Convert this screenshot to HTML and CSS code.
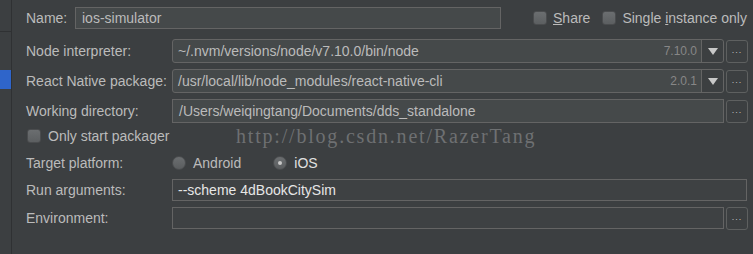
FILE: index.html
```
<!DOCTYPE html>
<html lang="en">
<head>
    <meta charset="UTF-8">
    <title>Run Configuration</title>
    <link rel="stylesheet" href="styles.css">
</head>
<body>
    <div class="window">
        <div class="sidebar">
            <div class="side-top"></div>
            <div class="side-selected"></div>
        </div>
        <div class="form">
            <div class="row row-name">
                <span class="label name-label">Name:</span>
                <div class="field name-field">ios-simulator</div>
                <div class="top-options">
                    <span class="check"></span><span class="opt-text"><u>S</u>hare</span>
                    <span class="check"></span><span class="opt-text">Single <u>i</u>nstance only</span>
                </div>
            </div>
            <div class="row row-node">
                <span class="label">Node interpreter:</span>
                <div class="combo">
                    <span class="combo-text">~/.nvm/versions/node/v7.10.0/bin/node</span>
                    <span class="combo-hint">7.10.0</span>
                    <span class="combo-arrow"></span>
                </div>
                <div class="dots">...</div>
            </div>
            <div class="row row-pkg">
                <span class="label">React Native package:</span>
                <div class="combo">
                    <span class="combo-text">/usr/local/lib/node_modules/react-native-cli</span>
                    <span class="combo-hint">2.0.1</span>
                    <span class="combo-arrow"></span>
                </div>
                <div class="dots">...</div>
            </div>
            <div class="row row-dir">
                <span class="label">Working directory:</span>
                <div class="field wide">/Users/weiqingtang/Documents/dds_standalone</div>
                <div class="dots">...</div>
            </div>
            <div class="row row-packager">
                <span class="check"></span><span class="opt-text">Only start packager</span>
            </div>
            <div class="row row-platform">
                <span class="label">Target platform:</span>
                <span class="radio"></span><span class="opt-text android">Android</span>
                <span class="radio selected"></span><span class="opt-text ios">iOS</span>
            </div>
            <div class="row row-args">
                <span class="label">Run arguments:</span>
                <div class="field flat full">--scheme 4dBookCitySim</div>
            </div>
            <div class="row row-env">
                <span class="label">Environment:</span>
                <div class="field flat wide"></div>
                <div class="dots">...</div>
            </div>
        </div>
        <div class="watermark">http://blog.csdn.net/RazerTang</div>
    </div>
</body>
</html>
```

FILE: styles.css
```
body {
    margin: 0;
    background-color: #3c3f41;
    font-family: "Liberation Sans", Arial, sans-serif;
    font-size: 14px;
    color: #bbbbbb;
}
.window {
    position: relative;
    display: flex;
    width: 753px;
    height: 254px;
    overflow: hidden;
}
.sidebar {
    width: 11px;
    flex-shrink: 0;
}
.side-top {
    height: 31px;
    border-bottom: 1px solid #2f3133;
}
.side-selected {
    margin-top: 38px;
    height: 19px;
    background: #2f65ca;
}
.form {
    flex: 1;
    display: flex;
    flex-direction: column;
    padding-left: 12px;
    border-left: 1px solid #2f3133;
}
.row {
    display: flex;
    align-items: center;
    white-space: nowrap;
}
.label {
    width: 146px;
    flex-shrink: 0;
    padding-left: 2px;
}
.name-label {
    width: 49px;
}
.row-name {
    margin-top: 7px;
    height: 22px;
}
.row-node {
    margin-top: 10px;
    height: 24px;
}
.row-pkg,
.row-dir {
    margin-top: 6px;
    height: 24px;
}
.row-packager {
    margin-top: 4px;
    height: 18px;
    padding-left: 3px;
}
.row-platform {
    margin-top: 8px;
    height: 20px;
}
.row-args,
.row-env {
    margin-top: 6px;
    height: 22px;
}
.field {
    box-sizing: border-box;
    flex-shrink: 0;
    height: 100%;
    border: 1px solid #646464;
    background: #45494a;
    padding: 0 7px;
    display: flex;
    align-items: center;
}
.name-field {
    width: 426px;
    padding-left: 6px;
}
.field.wide {
    width: 552px;
    padding-left: 6px;
}
.field.full {
    width: 575px;
}
.field.flat {
    background: #3e4143;
    color: #e6e6e6;
    padding-left: 5px;
}
.top-options {
    display: flex;
    align-items: center;
    margin-left: 32px;
}
.top-options .opt-text {
    margin-left: 6px;
    margin-right: 12px;
}
.check {
    box-sizing: border-box;
    flex-shrink: 0;
    width: 14px;
    height: 14px;
    border-radius: 3px;
    border: 1px solid #4a4c4e;
    background: linear-gradient(#6b6e70, #5c5f61);
}
.opt-text {
    margin-left: 7px;
    margin-right: 14px;
}
.opt-text u {
    text-decoration-thickness: 1px;
}
.combo {
    box-sizing: border-box;
    flex-shrink: 0;
    width: 552px;
    height: 100%;
    border: 1px solid #646464;
    border-radius: 3px;
    background: #45494a;
    display: flex;
    align-items: center;
}
.combo-text {
    flex: 1;
    padding-left: 5px;
}
.combo-hint {
    color: #878787;
    font-size: 12px;
    padding-right: 4px;
}
.combo-arrow {
    width: 21px;
    height: 100%;
    border-left: 1px solid #646464;
    background: #3c3f41;
    border-radius: 0 3px 3px 0;
    display: flex;
    align-items: center;
    justify-content: center;
}
.combo-arrow::after {
    content: "";
    border-left: 5px solid transparent;
    border-right: 5px solid transparent;
    border-top: 7px solid #c8c8c8;
}
.dots {
    box-sizing: border-box;
    flex-shrink: 0;
    width: 22px;
    height: 23px;
    margin-left: 2px;
    border: 1px solid #5e6060;
    border-radius: 3px;
    display: flex;
    align-items: center;
    justify-content: center;
    font-size: 9px;
    letter-spacing: 1px;
    color: #c0c0c0;
    padding-bottom: 3px;
}
.radio {
    box-sizing: border-box;
    flex-shrink: 0;
    width: 14px;
    height: 14px;
    border-radius: 50%;
    border: 1px solid #4a4c4e;
    background: linear-gradient(#6b6e70, #5a5d5f);
    display: flex;
    align-items: center;
    justify-content: center;
}
.radio.selected::after {
    content: "";
    width: 4px;
    height: 4px;
    border-radius: 50%;
    background: #c8c8c8;
}
.android {
    margin-right: 32px;
}
.ios {
    color: #e0e0e0;
}
.watermark {
    position: absolute;
    left: 236px;
    top: 125px;
    font-family: "Liberation Serif", serif;
    font-size: 20px;
    letter-spacing: 1.8px;
    color: #6e7072;
}
```
